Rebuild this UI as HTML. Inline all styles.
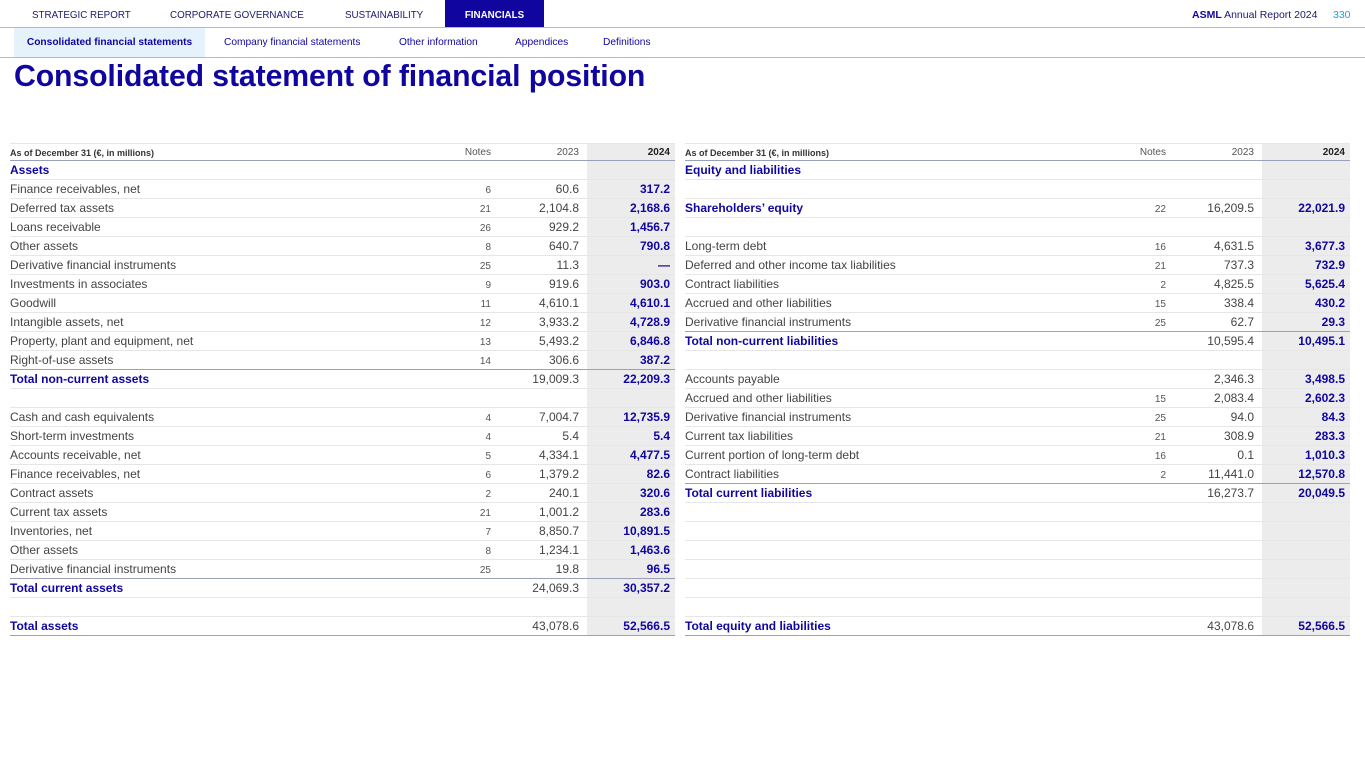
<!DOCTYPE html>
<html><head><meta charset="utf-8"><style>
*{margin:0;padding:0;box-sizing:border-box}
body{width:1365px;height:769px;background:#fff;font-family:"Liberation Sans",Arial,sans-serif;position:relative;overflow:hidden;color:#333}
.top{position:absolute;left:0;top:0;width:1365px;height:28px;border-bottom:1px solid #b8b8c8}
.top span{position:absolute;top:0;height:27px;line-height:27px;padding-top:2px;font-size:9.8px;color:#1a1a6e}
.top .act{background:#10069f;color:#fff;font-weight:bold;text-align:center}
.sub{position:absolute;left:0;top:28px;width:1365px;height:30px;border-bottom:1px solid #b8b8c8}
.sub span{position:absolute;top:0;height:29px;line-height:29px;font-size:10.2px;color:#10069f}
.sub .act{background:#e6f2fb;font-weight:bold;text-align:center}
h1{position:absolute;left:14px;top:60px;font-size:30.2px;color:#10069f;font-weight:bold;letter-spacing:-0.1px}
table{position:absolute;top:143px;border-collapse:collapse;table-layout:fixed;font-size:12px}
td{height:19px;border-top:1px solid #e6e6e6;padding:0;white-space:nowrap;color:#444;line-height:18px;vertical-align:middle}
td.n{text-align:right;font-size:10px;color:#555;line-height:14px;padding-top:3px}
td.a{text-align:right}
td.b{text-align:right;background:#ececec;color:#10069f;font-weight:bold;padding-right:5px}
tr.h td{font-size:9px;color:#555;border-top:1px solid #e6e6e6;border-bottom:1px solid #9aa0b8;height:17px;line-height:14px;padding-top:1px}
tr.h td.b{font-size:10px;color:#222}
tr.h td:first-child{font-weight:bold;color:#333}
tr.s td:first-child{color:#10069f;font-weight:bold}
tr.t td{border-top:1px solid #9aa0b8}
tr.t td:first-child{color:#10069f;font-weight:bold}
tr.last td{border-bottom:1px solid #9aa0b8}
</style></head><body>
<div class="top">
<span style="left:32px">STRATEGIC REPORT</span>
<span style="left:170px">CORPORATE GOVERNANCE</span>
<span style="left:345px">SUSTAINABILITY</span>
<span class="act" style="left:445px;width:99px">FINANCIALS</span>
<span style="left:1192px;font-size:10.5px"><b style="color:#10069f">ASML</b> Annual Report 2024</span>
<span style="left:1333px;color:#1aa5d8;font-size:10.5px">330</span>
</div>
<div class="sub">
<span class="act" style="left:14px;width:191px">Consolidated financial statements</span>
<span style="left:224px">Company financial statements</span>
<span style="left:399px">Other information</span>
<span style="left:515px">Appendices</span>
<span style="left:603px">Definitions</span>
</div>
<h1>Consolidated statement of financial position</h1>

<table style="left:10px;width:665px">
<colgroup><col style="width:450px"><col style="width:31px"><col style="width:88px"><col style="width:8px"><col style="width:88px"></colgroup>
<tr class="h"><td>As of December 31 (€, in millions)</td><td class="a" style="font-size:10px">Notes</td><td class="a" style="font-size:10px">2023</td><td></td><td class="b">2024</td></tr>
<tr class="s"><td>Assets</td><td></td><td></td><td></td><td class="b"></td></tr>
<tr><td>Finance receivables, net</td><td class="n">6</td><td class="a">60.6</td><td></td><td class="b">317.2</td></tr>
<tr><td>Deferred tax assets</td><td class="n">21</td><td class="a">2,104.8</td><td></td><td class="b">2,168.6</td></tr>
<tr><td>Loans receivable</td><td class="n">26</td><td class="a">929.2</td><td></td><td class="b">1,456.7</td></tr>
<tr><td>Other assets</td><td class="n">8</td><td class="a">640.7</td><td></td><td class="b">790.8</td></tr>
<tr><td>Derivative financial instruments</td><td class="n">25</td><td class="a">11.3</td><td></td><td class="b">—</td></tr>
<tr><td>Investments in associates</td><td class="n">9</td><td class="a">919.6</td><td></td><td class="b">903.0</td></tr>
<tr><td>Goodwill</td><td class="n">11</td><td class="a">4,610.1</td><td></td><td class="b">4,610.1</td></tr>
<tr><td>Intangible assets, net</td><td class="n">12</td><td class="a">3,933.2</td><td></td><td class="b">4,728.9</td></tr>
<tr><td>Property, plant and equipment, net</td><td class="n">13</td><td class="a">5,493.2</td><td></td><td class="b">6,846.8</td></tr>
<tr><td>Right-of-use assets</td><td class="n">14</td><td class="a">306.6</td><td></td><td class="b">387.2</td></tr>
<tr class="t"><td>Total non-current assets</td><td></td><td class="a">19,009.3</td><td></td><td class="b">22,209.3</td></tr>
<tr><td></td><td></td><td></td><td></td><td class="b"></td></tr>
<tr><td>Cash and cash equivalents</td><td class="n">4</td><td class="a">7,004.7</td><td></td><td class="b">12,735.9</td></tr>
<tr><td>Short-term investments</td><td class="n">4</td><td class="a">5.4</td><td></td><td class="b">5.4</td></tr>
<tr><td>Accounts receivable, net</td><td class="n">5</td><td class="a">4,334.1</td><td></td><td class="b">4,477.5</td></tr>
<tr><td>Finance receivables, net</td><td class="n">6</td><td class="a">1,379.2</td><td></td><td class="b">82.6</td></tr>
<tr><td>Contract assets</td><td class="n">2</td><td class="a">240.1</td><td></td><td class="b">320.6</td></tr>
<tr><td>Current tax assets</td><td class="n">21</td><td class="a">1,001.2</td><td></td><td class="b">283.6</td></tr>
<tr><td>Inventories, net</td><td class="n">7</td><td class="a">8,850.7</td><td></td><td class="b">10,891.5</td></tr>
<tr><td>Other assets</td><td class="n">8</td><td class="a">1,234.1</td><td></td><td class="b">1,463.6</td></tr>
<tr><td>Derivative financial instruments</td><td class="n">25</td><td class="a">19.8</td><td></td><td class="b">96.5</td></tr>
<tr class="t"><td>Total current assets</td><td></td><td class="a">24,069.3</td><td></td><td class="b">30,357.2</td></tr>
<tr><td></td><td></td><td></td><td></td><td class="b"></td></tr>
<tr class="last"><td style="color:#10069f;font-weight:bold">Total assets</td><td></td><td class="a">43,078.6</td><td></td><td class="b">52,566.5</td></tr>
</table>

<table style="left:685px;width:665px">
<colgroup><col style="width:450px"><col style="width:31px"><col style="width:88px"><col style="width:8px"><col style="width:88px"></colgroup>
<tr class="h"><td>As of December 31 (€, in millions)</td><td class="a" style="font-size:10px">Notes</td><td class="a" style="font-size:10px">2023</td><td></td><td class="b">2024</td></tr>
<tr class="s"><td>Equity and liabilities</td><td></td><td></td><td></td><td class="b"></td></tr>
<tr><td></td><td></td><td></td><td></td><td class="b"></td></tr>
<tr class="s"><td>Shareholders’ equity</td><td class="n">22</td><td class="a">16,209.5</td><td></td><td class="b">22,021.9</td></tr>
<tr><td></td><td></td><td></td><td></td><td class="b"></td></tr>
<tr><td>Long-term debt</td><td class="n">16</td><td class="a">4,631.5</td><td></td><td class="b">3,677.3</td></tr>
<tr><td>Deferred and other income tax liabilities</td><td class="n">21</td><td class="a">737.3</td><td></td><td class="b">732.9</td></tr>
<tr><td>Contract liabilities</td><td class="n">2</td><td class="a">4,825.5</td><td></td><td class="b">5,625.4</td></tr>
<tr><td>Accrued and other liabilities</td><td class="n">15</td><td class="a">338.4</td><td></td><td class="b">430.2</td></tr>
<tr><td>Derivative financial instruments</td><td class="n">25</td><td class="a">62.7</td><td></td><td class="b">29.3</td></tr>
<tr class="t"><td>Total non-current liabilities</td><td></td><td class="a">10,595.4</td><td></td><td class="b">10,495.1</td></tr>
<tr><td></td><td></td><td></td><td></td><td class="b"></td></tr>
<tr><td>Accounts payable</td><td></td><td class="a">2,346.3</td><td></td><td class="b">3,498.5</td></tr>
<tr><td>Accrued and other liabilities</td><td class="n">15</td><td class="a">2,083.4</td><td></td><td class="b">2,602.3</td></tr>
<tr><td>Derivative financial instruments</td><td class="n">25</td><td class="a">94.0</td><td></td><td class="b">84.3</td></tr>
<tr><td>Current tax liabilities</td><td class="n">21</td><td class="a">308.9</td><td></td><td class="b">283.3</td></tr>
<tr><td>Current portion of long-term debt</td><td class="n">16</td><td class="a">0.1</td><td></td><td class="b">1,010.3</td></tr>
<tr><td>Contract liabilities</td><td class="n">2</td><td class="a">11,441.0</td><td></td><td class="b">12,570.8</td></tr>
<tr class="t"><td>Total current liabilities</td><td></td><td class="a">16,273.7</td><td></td><td class="b">20,049.5</td></tr>
<tr><td></td><td></td><td></td><td></td><td class="b"></td></tr>
<tr><td></td><td></td><td></td><td></td><td class="b"></td></tr>
<tr><td></td><td></td><td></td><td></td><td class="b"></td></tr>
<tr><td></td><td></td><td></td><td></td><td class="b"></td></tr>
<tr><td></td><td></td><td></td><td></td><td class="b"></td></tr>
<tr><td></td><td></td><td></td><td></td><td class="b"></td></tr>
<tr class="last"><td style="color:#10069f;font-weight:bold">Total equity and liabilities</td><td></td><td class="a">43,078.6</td><td></td><td class="b">52,566.5</td></tr>
</table>
</body></html>
